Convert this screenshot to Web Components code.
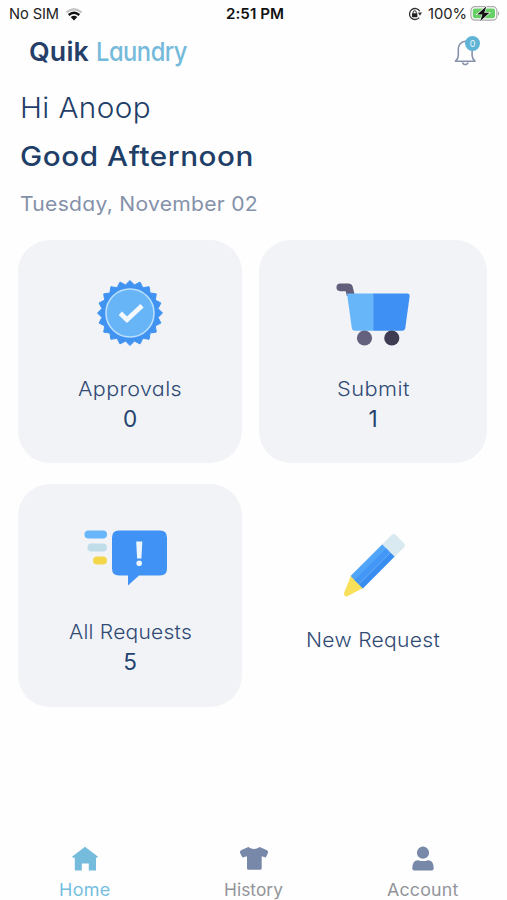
<!DOCTYPE html>
<html lang="en">
<head>
<meta charset="utf-8">
<title>Quik Laundry</title>
<style>
html,body{margin:0;background:#fefefe;height:900px;overflow:hidden}
</style>
</head>
<body>
<laundry-app></laundry-app>
<script>
const define = (name, html, setup) => {
  const tpl = document.createElement('template');
  tpl.innerHTML = html;
  customElements.define(name, class extends HTMLElement {
    connectedCallback() {
      if (this.shadowRoot) return;
      this.attachShadow({mode: 'open'}).append(tpl.content.cloneNode(true));
      if (setup) setup.call(this, this.shadowRoot);
    }
  });
};

// Text line set to the width in "w": a little tracking, the rest by widening the glyphs.
define('fit-text', `<style>
  :host{display:block;white-space:pre;width:max-content}
  span{display:inline-block;transform-origin:0 50%;vertical-align:top}
</style><span><slot></slot></span>`, function (root) {
  const span = root.querySelector('span');
  const want = +this.getAttribute('w'), n = this.textContent.length;
  if (!want) return;
  const have = span.getBoundingClientRect().width;
  span.style.letterSpacing = (want - have) * 0.3 / n + 'px';
  span.style.transform = 'scaleX(' + want / span.getBoundingClientRect().width + ')';
  this.style.width = want + 'px';
});

define('status-bar', `<style>
  :host{display:grid;grid-template-columns:1fr auto 1fr;align-items:center;height:28px;padding:0 7px 0 9px;color:#222;font-size:15px;line-height:18px;box-sizing:border-box}
  div{display:flex;align-items:center}
  .r{justify-content:flex-end}
  .time{font-weight:600;color:#111}
  svg{display:block}
</style>
<div><fit-text w="50">No SIM</fit-text>
<svg style="margin-left:6px" width="18" height="13" viewBox="0 0 18 13"><g fill="none"><path d="M1.4 4.5Q9-2 16.6 4.5" stroke="#c4c4c4" stroke-width="2.3"/><path d="M3.7 7Q9 2.5 14.3 7" stroke="#111" stroke-width="2.3"/></g><path d="M5.7 8.9Q9 6.6 12.3 8.9L9 12.5Z" fill="#111"/></svg></div>
<fit-text class="time" w="58">2:51 PM</fit-text>
<div class="r">
<svg width="14" height="14" viewBox="0 0 14 14"><path d="M11.8 4.3A5.5 5.5 0 1 0 11.2 10.6" fill="none" stroke="#333" stroke-width="1.3"/><path d="M9.9 5.6H14L12 8.8Z" fill="#333"/><rect x="4" y="6.2" width="5.4" height="4" rx=".6" fill="#222"/><path d="M5.1 6.5V5.4a1.6 1.6 0 0 1 3.2 0V6.5" fill="none" stroke="#222"/></svg>
<fit-text w="39" style="margin:0 3px 0 6px">100%</fit-text>
<svg width="30" height="18" viewBox="0 0 30 18"><rect x=".9" y="1.6" width="26" height="13.6" rx="4.2" fill="#fff" stroke="#a9aaa9" stroke-width="1.2"/><rect x="2.8" y="3.5" width="22.2" height="9.8" rx="2.2" fill="#68ce66"/><path d="M28 6q2.4 2.4 0 4.8z" fill="#a9aaa9"/><path d="M16.4 1.2L7.2 9.4h5.2L10.2 16.2 19.4 7.8h-5.2Z" fill="#111" stroke="#fff" stroke-width="1.2" paint-order="stroke"/></svg>
</div>`);

define('app-header', `<style>
  :host{display:flex;justify-content:space-between;height:52px;padding:0 29px 0 29px;box-sizing:border-box}
  .logo{display:flex;gap:7px;padding-top:8px;font-size:26px;height:32px;line-height:32px}
  .q{color:#263f68;font-weight:600}.l{color:#74badb;font-weight:500}
  .bell{position:relative;width:24px;height:28px;margin-top:11px}
  .badge{position:absolute;left:11px;top:-3px;width:15px;height:15px;border-radius:50%;background:#5fb4d6;color:#e8f6fc;font-size:9px;line-height:15px;text-align:center}
</style>
<div class="logo"><fit-text class="q" w="60">Quik</fit-text><fit-text class="l" w="91">Laundry</fit-text></div>
<div class="bell"><svg width="24" height="28" viewBox="0 0 24 28" fill="none" stroke="#8791ab" stroke-width="1.6" stroke-linejoin="round"><path d="M11.2 2.2C6.5 3 4.3 6 4.3 10.5V16.5Q4.3 19.5 1.5 22.2H21Q18.1 19.5 18.1 16.5V10.5C18.1 6 16 3 11.2 2.2Z"/><path d="M8.6 23.3a2.7 2.7 0 0 0 5.3 0"/></svg><span class="badge">0</span></div>`);

define('user-greeting', `<style>
  :host{display:block;padding:5px 20px 0;height:160px;box-sizing:border-box;color:#1f3e68}
  .hi{font-size:28px;font-weight:300;line-height:46px}
  .good{font-size:27.5px;font-weight:500;line-height:50px}
  .date{font-size:20px;font-weight:400;line-height:46px;color:#8491aa}
</style>
<fit-text class="hi" w="131">Hi Anoop</fit-text>
<fit-text class="good" w="234">Good Afternoon</fit-text>
<fit-text class="date" w="238">Tuesday, November 02</fit-text>`);

define('menu-card', `<style>
  :host{display:flex;flex-direction:column;align-items:center;height:223px;border-radius:32px;background:#f1f3f7;color:#304a74;box-sizing:border-box;padding-top:32px}
  :host([plain]){background:none}
  .icon{height:84px}
  .text{display:flex;flex-direction:column;align-items:center;padding-top:17.5px;font-size:20px;font-weight:300;line-height:30px}
  :host([plain]) .text{padding-top:25px}
  .count{font-size:22.5px;font-weight:400;color:#24426e}
</style>
<div class="icon"><slot name="icon"></slot></div>
<div class="text"><slot></slot><span class="count"><slot name="count"></slot></span></div>`);

define('card-grid', `<style>
  :host{display:grid;grid-template-columns:224px 228px;column-gap:17px;row-gap:20.5px;padding:0 18px}
  svg{display:block}
</style>
<menu-card>
<svg slot="icon" width="84" height="84" viewBox="0 0 84 84"><polygon id="seal" fill="#4193f2" stroke="#4193f2" stroke-linejoin="round"/><circle cx="42" cy="41" r="24" fill="#67b5f7" stroke="#b9dffc" stroke-width="1.6"/><path d="M32.3 41.2L39 47.7 54 33.8" fill="none" stroke="#f4f9fe" stroke-width="4.8"/></svg>
<fit-text w="104">Approvals</fit-text><span slot="count">0</span></menu-card>
<menu-card>
<svg slot="icon" width="84" height="84" viewBox="0 0 84 84"><path d="M9.3 11.5H17Q20.7 11.5 21.7 14.8L24 24H15.8L14.8 19.2H9.3A3.85 3.85 0 0 1 9.3 11.5Z" fill="#615f7c"/><path d="M16 21.5H42.8V58.8H24Q21.3 58.8 20.8 56Z" fill="#67b6fa"/><path d="M42.3 21.5H76Q79 21.5 78.6 24.6L74.3 56Q73.9 58.8 71.2 58.8H42.3Z" fill="#3f90f4"/><circle cx="33.5" cy="66" r="7.6" fill="#64617f"/><circle cx="60.8" cy="66" r="7.6" fill="#3e3c52"/></svg>
<fit-text w="73">Submit</fit-text><span slot="count">1</span></menu-card>
<menu-card>
<svg slot="icon" width="94" height="84" viewBox="0 0 94 84"><rect x="1.5" y="14.5" width="22.5" height="8" rx="4" fill="#68b6fa"/><rect x="4.5" y="27.5" width="19.5" height="8" rx="4" fill="#c0dde9"/><rect x="10" y="40.5" width="14" height="8" rx="4" fill="#f4d64b"/><path d="M36 14.5H77Q84 14.5 84 21.5V52.5Q84 59.5 77 59.5H56L45 69.5V59.5H36Q29 59.5 29 52.5V21.5Q29 14.5 36 14.5Z" fill="#4093f4"/><path d="M53.2 25.5H59.3L58.4 42.5H54.1Z" fill="#edf5fd"/><circle cx="56.2" cy="47.3" r="2.8" fill="#edf5fd"/></svg>
<fit-text w="123">All Requests</fit-text><span slot="count">5</span></menu-card>
<menu-card plain>
<svg slot="icon" width="84" height="84" viewBox="0 0 84 84"><g transform="translate(13 79) rotate(-45)"><path d="M1 3Q-1 .3 1.5-1.5L18.5-8.7 21 0 18.5 8.7Z" fill="#f9e05b"/><path d="M18 -8.7H63V0H18Z" fill="#50a5f8"/><path d="M18 -3H63V3H18Z" fill="#4397f6"/><path d="M18 3H63V8.7H18Z" fill="#388df0"/><path d="M63-8.7H76Q79-8.7 79-5.7V5.7Q79 8.7 76 8.7H63Z" fill="#d8e9ef"/></g></svg>
<fit-text w="134">New Request</fit-text></menu-card>`, function (root) {
  const pts = [];
  for (let i = 0; i < 40; i++) {
    const r = i % 2 ? 28.4 : 32.5, a = i * Math.PI / 20;
    pts.push((42 + r * Math.sin(a)).toFixed(2) + ',' + (41 - r * Math.cos(a)).toFixed(2));
  }
  root.getElementById('seal').setAttribute('points', pts.join(' '));
});

define('nav-item', `<style>
  :host{display:flex;flex-direction:column;align-items:center;color:#929499;font-size:17px;line-height:24px;gap:4px}
  :host([active]){color:#75bedf}
  ::slotted(svg){display:block}
</style><slot name="icon"></slot><slot></slot>`);

define('nav-bar', `<style>
  :host{display:grid;grid-template-columns:repeat(3,1fr);margin-top:auto;height:61px;padding-top:5px;box-sizing:border-box}
</style>
<nav-item active><svg slot="icon" width="30" height="30" viewBox="0 0 30 30"><path d="M15 2.8L28 12.7 26.8 13.8H26V26.5H18.8V19.5H11.8V26.5H4.8V13.8H3.2L2 12.7Z" fill="#75bbdb"/></svg><fit-text w="51.5">Home</fit-text></nav-item>
<nav-item><svg slot="icon" width="30" height="30" viewBox="0 0 30 30"><path d="M9.3 3Q15 7 20.7 3L28 6.3Q29.6 7.5 28.8 9.3L26.8 13.4 22.7 12.3V24.3Q22.7 25.8 21.2 25.8H9.3Q8 25.8 8 24.3V12.3L3.5 13.4 1.2 9.3Q.5 7.5 2 6.3Z" fill="#7888a8"/></svg><fit-text w="59">History</fit-text></nav-item>
<nav-item><svg slot="icon" width="30" height="30" viewBox="0 0 30 30"><circle cx="15" cy="8.7" r="6.1" fill="#7888a8"/><path d="M4.3 24.5Q4.3 16.2 10 16.2Q15 18 20 16.2Q25.7 16.2 25.7 24.5Q25.7 26.4 23.8 26.4H6.2Q4.3 26.4 4.3 24.5Z" fill="#7888a8"/></svg><fit-text w="71.5">Account</fit-text></nav-item>`);

define('laundry-app', `<style>
  :host{display:flex;flex-direction:column;width:507px;height:900px;background:#fefefe;font-family:Inter,"Liberation Sans",sans-serif;font-feature-settings:"cv11" 1}
</style>
<status-bar></status-bar><app-header></app-header><user-greeting></user-greeting><card-grid></card-grid><nav-bar></nav-bar>`);
</script>
</body>
</html>
